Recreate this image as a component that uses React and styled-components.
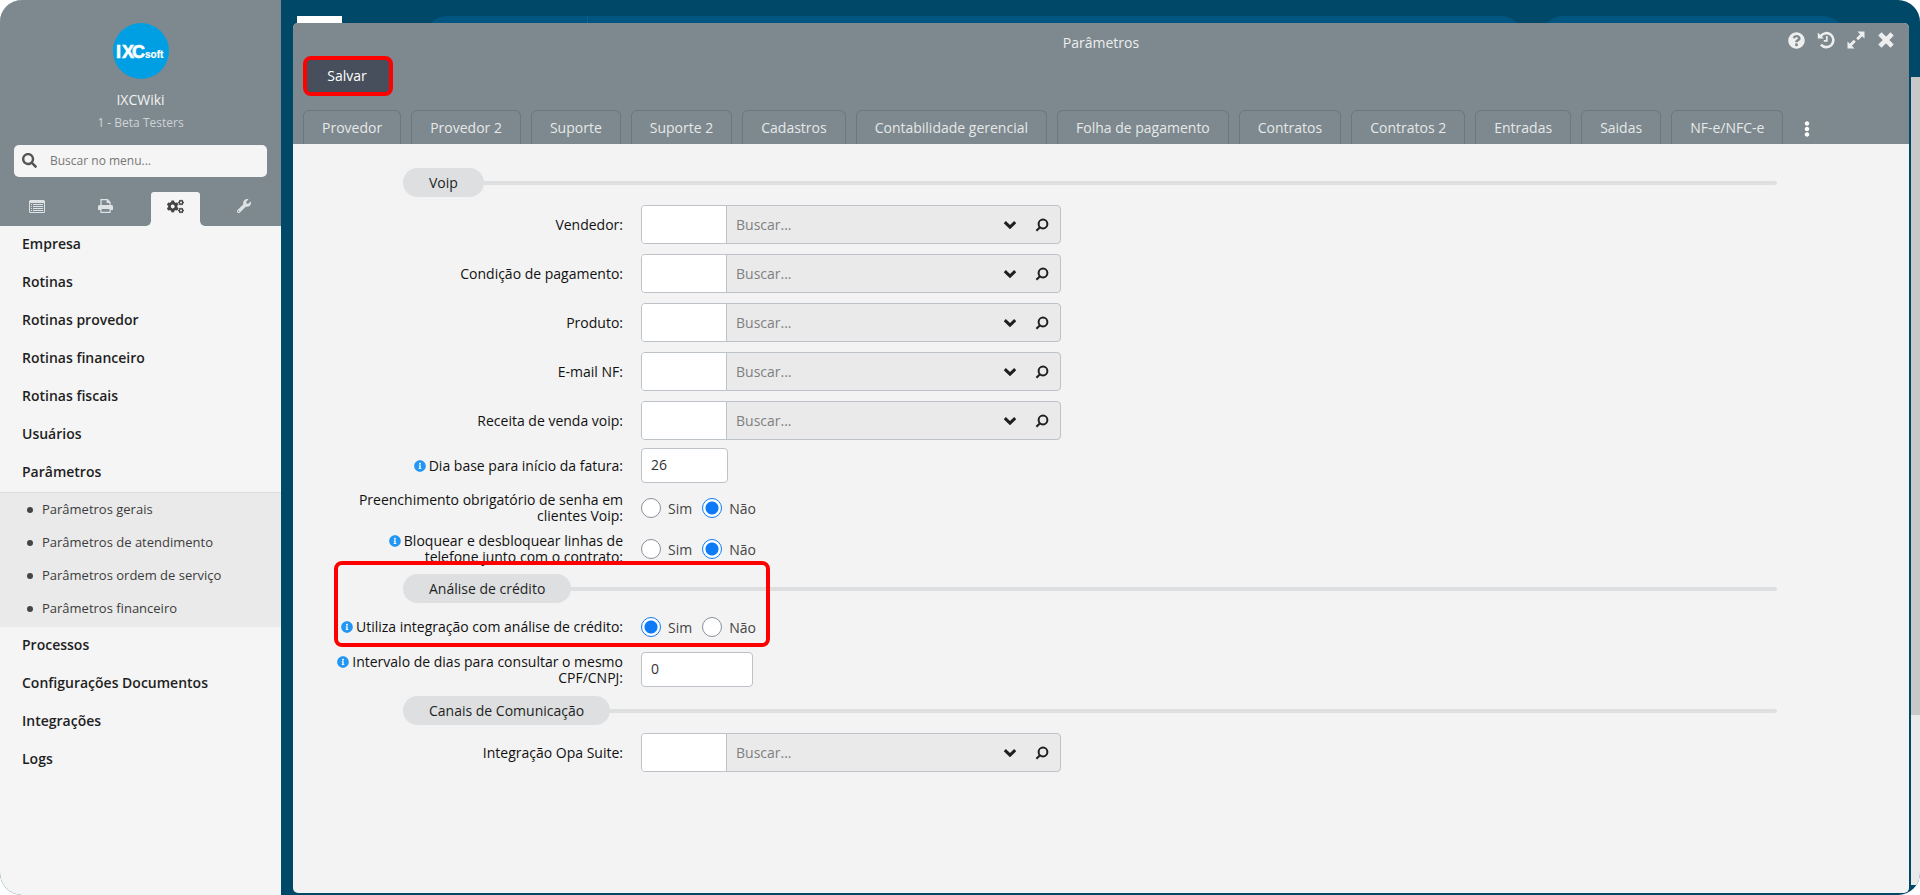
import React, { useState } from 'react'
import styled, { createGlobalStyle } from 'styled-components'
import { FaSearch, FaCogs, FaWrench, FaQuestionCircle, FaInfoCircle, FaEllipsisV } from 'react-icons/fa'

const menuTop = ['Empresa', 'Rotinas', 'Rotinas provedor', 'Rotinas financeiro', 'Rotinas fiscais', 'Usuários', 'Parâmetros']
const submenu = ['Parâmetros gerais', 'Parâmetros de atendimento', 'Parâmetros ordem de serviço', 'Parâmetros financeiro']
const menuBottom = ['Processos', 'Configurações Documentos', 'Integrações', 'Logs']

const tabs = [
  'Provedor',
  'Provedor 2',
  'Suporte',
  'Suporte 2',
  'Cadastros',
  'Contabilidade gerencial',
  'Folha de pagamento',
  'Contratos',
  'Contratos 2',
  'Entradas',
  'Saidas',
  'NF-e/NFC-e',
]

const lookups = [
  { id: 'vendedor', label: 'Vendedor:' },
  { id: 'condicao', label: 'Condição de pagamento:' },
  { id: 'produto', label: 'Produto:' },
  { id: 'email', label: 'E-mail NF:' },
  { id: 'receita', label: 'Receita de venda voip:' },
]

const ListIcon = () => (
  <svg width="16" height="13" viewBox="0 0 16 13" aria-hidden="true">
    <path
      fill="currentColor"
      fillRule="evenodd"
      d="M1.5 0h13A1.5 1.5 0 0 1 16 1.5v10a1.5 1.5 0 0 1-1.5 1.5h-13A1.5 1.5 0 0 1 0 11.5v-10A1.5 1.5 0 0 1 1.5 0zM1 3v8.5a.5.5 0 0 0 .5.5h13a.5.5 0 0 0 .5-.5V3zM2 4h1v1H2zm2 0h10v1H4zM2 6h1v1H2zm2 0h10v1H4zM2 8h1v1H2zm2 0h10v1H4zM2 10h1v1H2zm2 0h10v1H4z"
    />
  </svg>
)

const PrinterIcon = () => (
  <svg width="15" height="14" viewBox="0 0 15 14" aria-hidden="true">
    <path fill="none" stroke="currentColor" strokeWidth="1.3" d="M3 7V.7h6.5L12 3.2V7M9.3.7v2.7H12" />
    <path fill="currentColor" fillRule="evenodd" d="M1.5 6h12A1.5 1.5 0 0 1 15 7.5V11h-2.300v2.200a.8.8 0 0 1-.8.8H3.100a.8.8 0 0 1-.8-.8V11H0V7.500A1.500 1.500 0 0 1 1.500 6zM3.500 10v2.700h8V10z" />
  </svg>
)

const HistoryIcon = () => (
  <svg width="18" height="18" viewBox="0 0 18 18" aria-hidden="true">
    <g fill="none" stroke="currentColor">
      <path strokeWidth="2.6" d="M3.6 5.2A7 7 0 1 1 4 13.6" />
      <path strokeWidth="1.7" d="M9.800 5v4.800H6.800" />
    </g>
    <path fill="currentColor" d="M.8 1.5v6h6z" />
  </svg>
)

const ExpandIcon = () => (
  <svg width="18" height="18" viewBox="0 0 18 18" aria-hidden="true">
    <path fill="currentColor" d="M10.500.5h7v7l-2.300-2.300-4 4-2-2 4-4zM.5 17.500v-7l2.300 2.300 4-4 2 2-4 4 2.700 2.700z" />
  </svg>
)

const CloseIcon = () => (
  <svg width="18" height="18" viewBox="0 0 18 18" aria-hidden="true">
    <path stroke="currentColor" strokeWidth="4.6" strokeLinecap="square" d="m4.500 4.500 9 9m0-9-9 9" />
  </svg>
)

const ChevronIcon = () => (
  <svg width="14" height="10" viewBox="0 0 14 10" aria-hidden="true">
    <path fill="none" stroke="currentColor" strokeWidth="3" d="m1.800 2.200 5.200 5 5.200-5" />
  </svg>
)

const LookupIcon = () => (
  <svg width="14" height="14" viewBox="0 0 14 14" aria-hidden="true">
    <g fill="none" stroke="currentColor" strokeWidth="2">
      <circle cx="8" cy="6" r="4.4" />
      <path d="M5 9.200 1.400 12.800" />
    </g>
  </svg>
)

const Logo = () => (
  <svg width="56" height="56" viewBox="0 0 56 56" role="img" aria-label="IXCsoft">
    <circle cx="28" cy="28" r="28" fill="#009fe3" />
    <g fill="#fff" stroke="#fff" fontFamily="Liberation Sans, sans-serif" fontWeight="700">
      <g strokeWidth="0.6" fontSize="18">
        <text x="3" y="35">I</text>
        <text x="9" y="35">X</text>
        <text x="19" y="35">C</text>
      </g>
      <text x="32" y="35" fontSize="10" strokeWidth="0.2">soft</text>
    </g>
  </svg>
)

const Legend = ({ children }) => (
  <SectionTitle>
    <Pill>{children}</Pill>
    <Rule />
  </SectionTitle>
)

const FieldLabel = ({ htmlFor, id, info, children }) => (
  <LabelCell>
    <Label as={htmlFor ? 'label' : 'span'} htmlFor={htmlFor} id={id}>
      {info && <InfoIcon aria-hidden="true" />}
      {children}
    </Label>
  </LabelCell>
)

const LookupField = ({ id, label }) => (
  <Row>
    <FieldLabel htmlFor={id}>{label}</FieldLabel>
    <Lookup>
      <CodeInput id={id} type="text" />
      <SearchInput type="text" placeholder="Buscar..." aria-label={`Buscar ${label}`} />
      <LookupButton type="button" aria-label="Abrir lista">
        <ChevronIcon />
      </LookupButton>
      <LookupButton type="button" aria-label="Pesquisar">
        <LookupIcon />
      </LookupButton>
    </Lookup>
  </Row>
)

const RadioField = ({ name, label, info, initial }) => {
  const [value, setValue] = useState(initial)
  return (
    <Row>
      <FieldLabel id={`${name}-label`} info={info}>{label}</FieldLabel>
      <Radios role="radiogroup" aria-labelledby={`${name}-label`}>
        {['Sim', 'Não'].map((option) => (
          <RadioLabel key={option}>
            <Radio type="radio" name={name} checked={value === option} onChange={() => setValue(option)} />
            {option}
          </RadioLabel>
        ))}
      </Radios>
    </Row>
  )
}

const App = () => {
  return (
    <>
      <GlobalStyle />
      <Page>
        <Sidebar>
          <Profile>
            <Logo />
            <UserName>IXCWiki</UserName>
            <UserGroup>1 - Beta Testers</UserGroup>
            <MenuSearch>
              <FaSearch size={15} />
              <MenuSearchInput type="text" placeholder="Buscar no menu..." aria-label="Buscar no menu" />
            </MenuSearch>
            <IconTabs>
              <IconTab type="button" aria-label="Lista"><ListIcon /></IconTab>
              <IconTab type="button" aria-label="Relatórios"><PrinterIcon /></IconTab>
              <IconTab type="button" aria-label="Configurações" $active><FaCogs size={17} /></IconTab>
              <IconTab type="button" aria-label="Ferramentas"><FaWrench size={14} /></IconTab>
            </IconTabs>
          </Profile>
          <nav>
            <Menu>
              {menuTop.map((item) => (
                <li key={item}><MenuLink href="#">{item}</MenuLink></li>
              ))}
              <li>
                <Submenu>
                  {submenu.map((item) => (
                    <li key={item}><SubmenuLink href="#">{item}</SubmenuLink></li>
                  ))}
                </Submenu>
              </li>
              {menuBottom.map((item) => (
                <li key={item}><MenuLink href="#">{item}</MenuLink></li>
              ))}
            </Menu>
          </nav>
        </Sidebar>

        <Desktop>
          <Backdrop aria-hidden="true">
            <BackdropBlock />
            <BackdropBar $left="144px" $right="397px"><BackdropDivider /></BackdropBar>
            <BackdropBar $left="1260px" $right="75px" />
          </Backdrop>
          <Window>
            <WindowHead>
              <TitleBar>
                <Title>Parâmetros</Title>
                <Actions>
                  <IconButton type="button" aria-label="Ajuda"><FaQuestionCircle size={17} /></IconButton>
                  <IconButton type="button" aria-label="Histórico"><HistoryIcon /></IconButton>
                  <IconButton type="button" aria-label="Expandir"><ExpandIcon /></IconButton>
                  <IconButton type="button" aria-label="Fechar"><CloseIcon /></IconButton>
                </Actions>
              </TitleBar>
              <SaveButton type="button">Salvar</SaveButton>
              <Tabs>
                {tabs.map((tab) => (
                  <Tab key={tab} type="button">{tab}</Tab>
                ))}
                <MoreButton type="button" aria-label="Mais abas"><FaEllipsisV size={16} /></MoreButton>
              </Tabs>
            </WindowHead>

            <Form onSubmit={(e) => e.preventDefault()}>
              <Legend>Voip</Legend>
              <LookupList>
                {lookups.map((item) => (
                  <LookupField key={item.id} {...item} />
                ))}
              </LookupList>
              <Row>
                <FieldLabel htmlFor="dia" info>Dia base para início da fatura:</FieldLabel>
                <NumberInput id="dia" type="text" defaultValue="26" $width="87px" />
              </Row>
              <RadioField name="senha" label="Preenchimento obrigatório de senha em clientes Voip:" initial="Não" />
              <RadioField name="bloqueio" info label="Bloquear e desbloquear linhas de telefone junto com o contrato:" initial="Não" />
              <Highlight>
                <Legend>Análise de crédito</Legend>
                <RadioField name="analise" info label="Utiliza integração com análise de crédito:" initial="Sim" />
              </Highlight>
              <Row>
                <FieldLabel htmlFor="intervalo" info>Intervalo de dias para consultar o mesmo CPF/CNPJ:</FieldLabel>
                <NumberInput id="intervalo" type="text" defaultValue="0" $width="112px" />
              </Row>
              <Legend>Canais de Comunicação</Legend>
              <LookupField id="opa" label="Integração Opa Suite:" />
            </Form>
          </Window>
          <Scrollbar aria-hidden="true"><Thumb /></Scrollbar>
        </Desktop>
      </Page>
    </>
  )
}

const GlobalStyle = createGlobalStyle`
  *, *::before, *::after {
    box-sizing: border-box;
  }
  body {
    margin: 0;
    background: #fff;
    font-family: 'Open Sans', 'Noto Sans', sans-serif;
    font-size: 14px;
    color: #1f1f1f;
  }
  button, input {
    font-family: inherit;
    font-size: inherit;
  }
  button {
    cursor: pointer;
  }
`

const Page = styled.div`
  display: flex;
  min-height: 100vh;
  border-radius: 22px;
  overflow: hidden;
  background: #004868;
`

const Sidebar = styled.aside`
  flex: 0 0 281px;
  background: #f5f5f5;
`

const Profile = styled.header`
  display: flex;
  flex-direction: column;
  align-items: center;
  padding-top: 23px;
  background: #7d898e;
`

const UserName = styled.div`
  margin-top: 11px;
  line-height: 20px;
  color: #f3f3f3;
`

const UserGroup = styled.div`
  margin-top: 4px;
  font-size: 12px;
  line-height: 18px;
  color: #cfd4d6;
`

const MenuSearch = styled.div`
  display: flex;
  align-items: center;
  align-self: stretch;
  height: 32px;
  margin: 13px 14px 15px;
  padding: 0 8px 2px;
  border-radius: 5px;
  background: #f5f5f5;
  color: #555;
`

const MenuSearchInput = styled.input`
  flex: 1;
  min-width: 0;
  padding: 0 13px;
  border: 0;
  background: none;
  font-size: 12px;
  outline: 0;
  &::placeholder {
    color: #777;
  }
`

const IconTabs = styled.div`
  display: flex;
  justify-content: space-between;
  align-self: stretch;
  padding: 0 12px;
`

const IconTab = styled.button`
  position: relative;
  display: flex;
  align-items: center;
  justify-content: center;
  width: 49px;
  height: 34px;
  padding: 0 0 6px;
  border: 0;
  border-radius: 3px 3px 0 0;
  background: ${(props) => (props.$active ? '#f5f5f5' : 'transparent')};
  color: ${(props) => (props.$active ? '#444' : '#dfe2e4')};
  &::before, &::after {
    content: '';
    display: ${(props) => (props.$active ? 'block' : 'none')};
    position: absolute;
    bottom: 0;
    width: 4px;
    height: 4px;
  }
  &::before {
    right: 100%;
    background: radial-gradient(circle at 0 0, transparent 3px, #f5f5f5 4px);
  }
  &::after {
    left: 100%;
    background: radial-gradient(circle at 100% 0, transparent 3px, #f5f5f5 4px);
  }
`

const Menu = styled.ul`
  margin: 0;
  padding: 0;
  list-style: none;
`

const MenuLink = styled.a`
  display: block;
  padding: 0 22px 2px;
  font-weight: 600;
  line-height: 36px;
  color: #1f1f1f;
  text-decoration: none;
`

const Submenu = styled.ul`
  margin: 0;
  padding: 0 0 2px;
  border-top: 1px solid #dcdcdc;
  background: #eaeaea;
  list-style: none;
`

const SubmenuLink = styled.a`
  display: flex;
  align-items: center;
  gap: 9px;
  padding-left: 27px;
  font-size: 13px;
  line-height: 33px;
  color: #3c3c3c;
  text-decoration: none;
  &::before {
    content: '';
    width: 6px;
    height: 6px;
    border-radius: 50%;
    background: #444;
  }
`

const Desktop = styled.main`
  position: relative;
  display: flex;
  flex: 1;
  min-width: 0;
  padding: 23px 0 2px 12px;
`

// bars of the dashboard that stay visible behind the window
const Backdrop = styled.div`
  position: absolute;
  inset: 16px 0 auto 0;
`

const BackdropBlock = styled.div`
  width: 45px;
  height: 44px;
  margin-left: 16px;
  background: #fff;
`

const BackdropBar = styled.div`
  position: absolute;
  top: 0;
  left: ${(props) => props.$left};
  right: ${(props) => props.$right};
  height: 44px;
  border-radius: 22px;
  background: #005680;
`

const BackdropDivider = styled.div`
  width: 1px;
  height: 44px;
  margin-left: 162px;
  background: #00688f;
`

const Window = styled.section`
  position: relative;
  flex: 1;
  min-width: 0;
  display: flex;
  flex-direction: column;
  border-radius: 5px;
  overflow: hidden;
  background: #f3f3f3;
`

const WindowHead = styled.header`
  background: #7d898e;
  padding-left: 10px;
`

const TitleBar = styled.div`
  display: flex;
  justify-content: center;
  height: 33px;
`

const Title = styled.h1`
  margin: 0;
  padding: 10px 10px 0 0;
  font-size: 14px;
  font-weight: 500;
  line-height: 20px;
  color: #eee;
`

const Actions = styled.div`
  position: absolute;
  top: 7px;
  right: 13px;
  display: flex;
  gap: 10px;
`

const IconButton = styled.button`
  display: flex;
  align-items: center;
  justify-content: center;
  width: 20px;
  height: 20px;
  padding: 0;
  border: 0;
  background: none;
  color: #eee;
`

const SaveButton = styled.button`
  display: block;
  width: 90px;
  height: 40px;
  padding: 0 2px 2px 0;
  border: 4px solid #f00;
  border-radius: 8px;
  background: #464f5b;
  color: #fff;
`

const Tabs = styled.div`
  display: flex;
  gap: 10px;
  margin-top: 14px;
`

const Tab = styled.button`
  height: 34px;
  padding: 0 18px;
  border: 1px solid #6b7880;
  border-bottom: 0;
  border-radius: 6px 6px 0 0;
  background: none;
  color: #e6e8e9;
  white-space: nowrap;
`

const MoreButton = styled.button`
  display: flex;
  align-items: center;
  margin-left: 6px;
  padding: 4px 0 0;
  border: 0;
  background: none;
  color: #fff;
`

const Form = styled.form`
  padding: 24px 132px 24px 40px;
`

const SectionTitle = styled.div`
  display: flex;
  align-items: center;
  padding-left: 70px;
  margin-bottom: 8px;
`

const Pill = styled.h2`
  margin: 0;
  padding: 0 26px;
  border-radius: 15px;
  background: #dddfe1;
  font-size: 14px;
  font-weight: 400;
  line-height: 29px;
`

const Rule = styled.div`
  flex: 1;
  height: 4px;
  border-radius: 0 2px 2px 0;
  background: #dedfe0;
`

const Row = styled.div`
  display: grid;
  grid-template-columns: 290px 1fr;
  column-gap: 18px;
  align-items: center;
  min-height: 32px;
  margin-bottom: 9px;
`

const LookupList = styled.div`
  display: grid;
  gap: 10px;
  margin-bottom: 8px;
  ${Row} {
    margin-bottom: 0;
  }
`

const LabelCell = styled.div`
  text-align: right;
  line-height: 16px;
`

const Label = styled.label`
  color: #111;
`

const InfoIcon = styled(FaInfoCircle)`
  width: 12px;
  height: 12px;
  margin-right: 3px;
  vertical-align: -1px;
  color: #2196f3;
`

const Lookup = styled.div`
  display: flex;
  width: 420px;
  height: 39px;
  padding-right: 2px;
  border: 1px solid #bcc2c7;
  border-radius: 4px;
  overflow: hidden;
  background: #eaeaea;
`

const CodeInput = styled.input`
  width: 85px;
  padding: 0 9px;
  border: 0;
  border-right: 1px solid #bcc2c7;
  background: #fff;
`

const SearchInput = styled.input`
  flex: 1;
  min-width: 0;
  padding: 0 9px;
  border: 0;
  background: none;
  &::placeholder {
    color: #808080;
  }
`

const LookupButton = styled.button`
  display: flex;
  align-items: center;
  justify-content: center;
  width: 32px;
  padding: 0;
  border: 0;
  background: none;
  color: #1f1f1f;
`

const NumberInput = styled.input`
  width: ${(props) => props.$width};
  height: 35px;
  padding: 0 9px 2px;
  border: 1px solid #bcc2c7;
  border-radius: 4px;
  background: #fff;
  color: #333;
`

const Radios = styled.div`
  display: flex;
  gap: 10px;
`

const RadioLabel = styled.label`
  display: flex;
  align-items: center;
  gap: 7px;
  color: #444;
`

const Radio = styled.input`
  appearance: none;
  width: 20px;
  height: 20px;
  margin: 0;
  border: 1px solid #8b909a;
  border-radius: 50%;
  background: #fff;
  &:checked {
    border-color: #0d7bf5;
    background: radial-gradient(circle, #0d7bf5 6px, #fff 7px);
  }
`

// red frame drawn over the credit analysis group
const Highlight = styled.div`
  position: relative;
  &::after {
    content: '';
    position: absolute;
    inset: -13px auto -4px 1px;
    width: 436px;
    border: 4px solid #f00;
    border-radius: 8px;
    pointer-events: none;
  }
`

const Scrollbar = styled.div`
  flex: 0 0 9px;
  margin: 54px 0 8px 2px;
  background: #eaeaea;
`

const Thumb = styled.div`
  height: 79%;
  background: #c8c8c8;
`

export default App
